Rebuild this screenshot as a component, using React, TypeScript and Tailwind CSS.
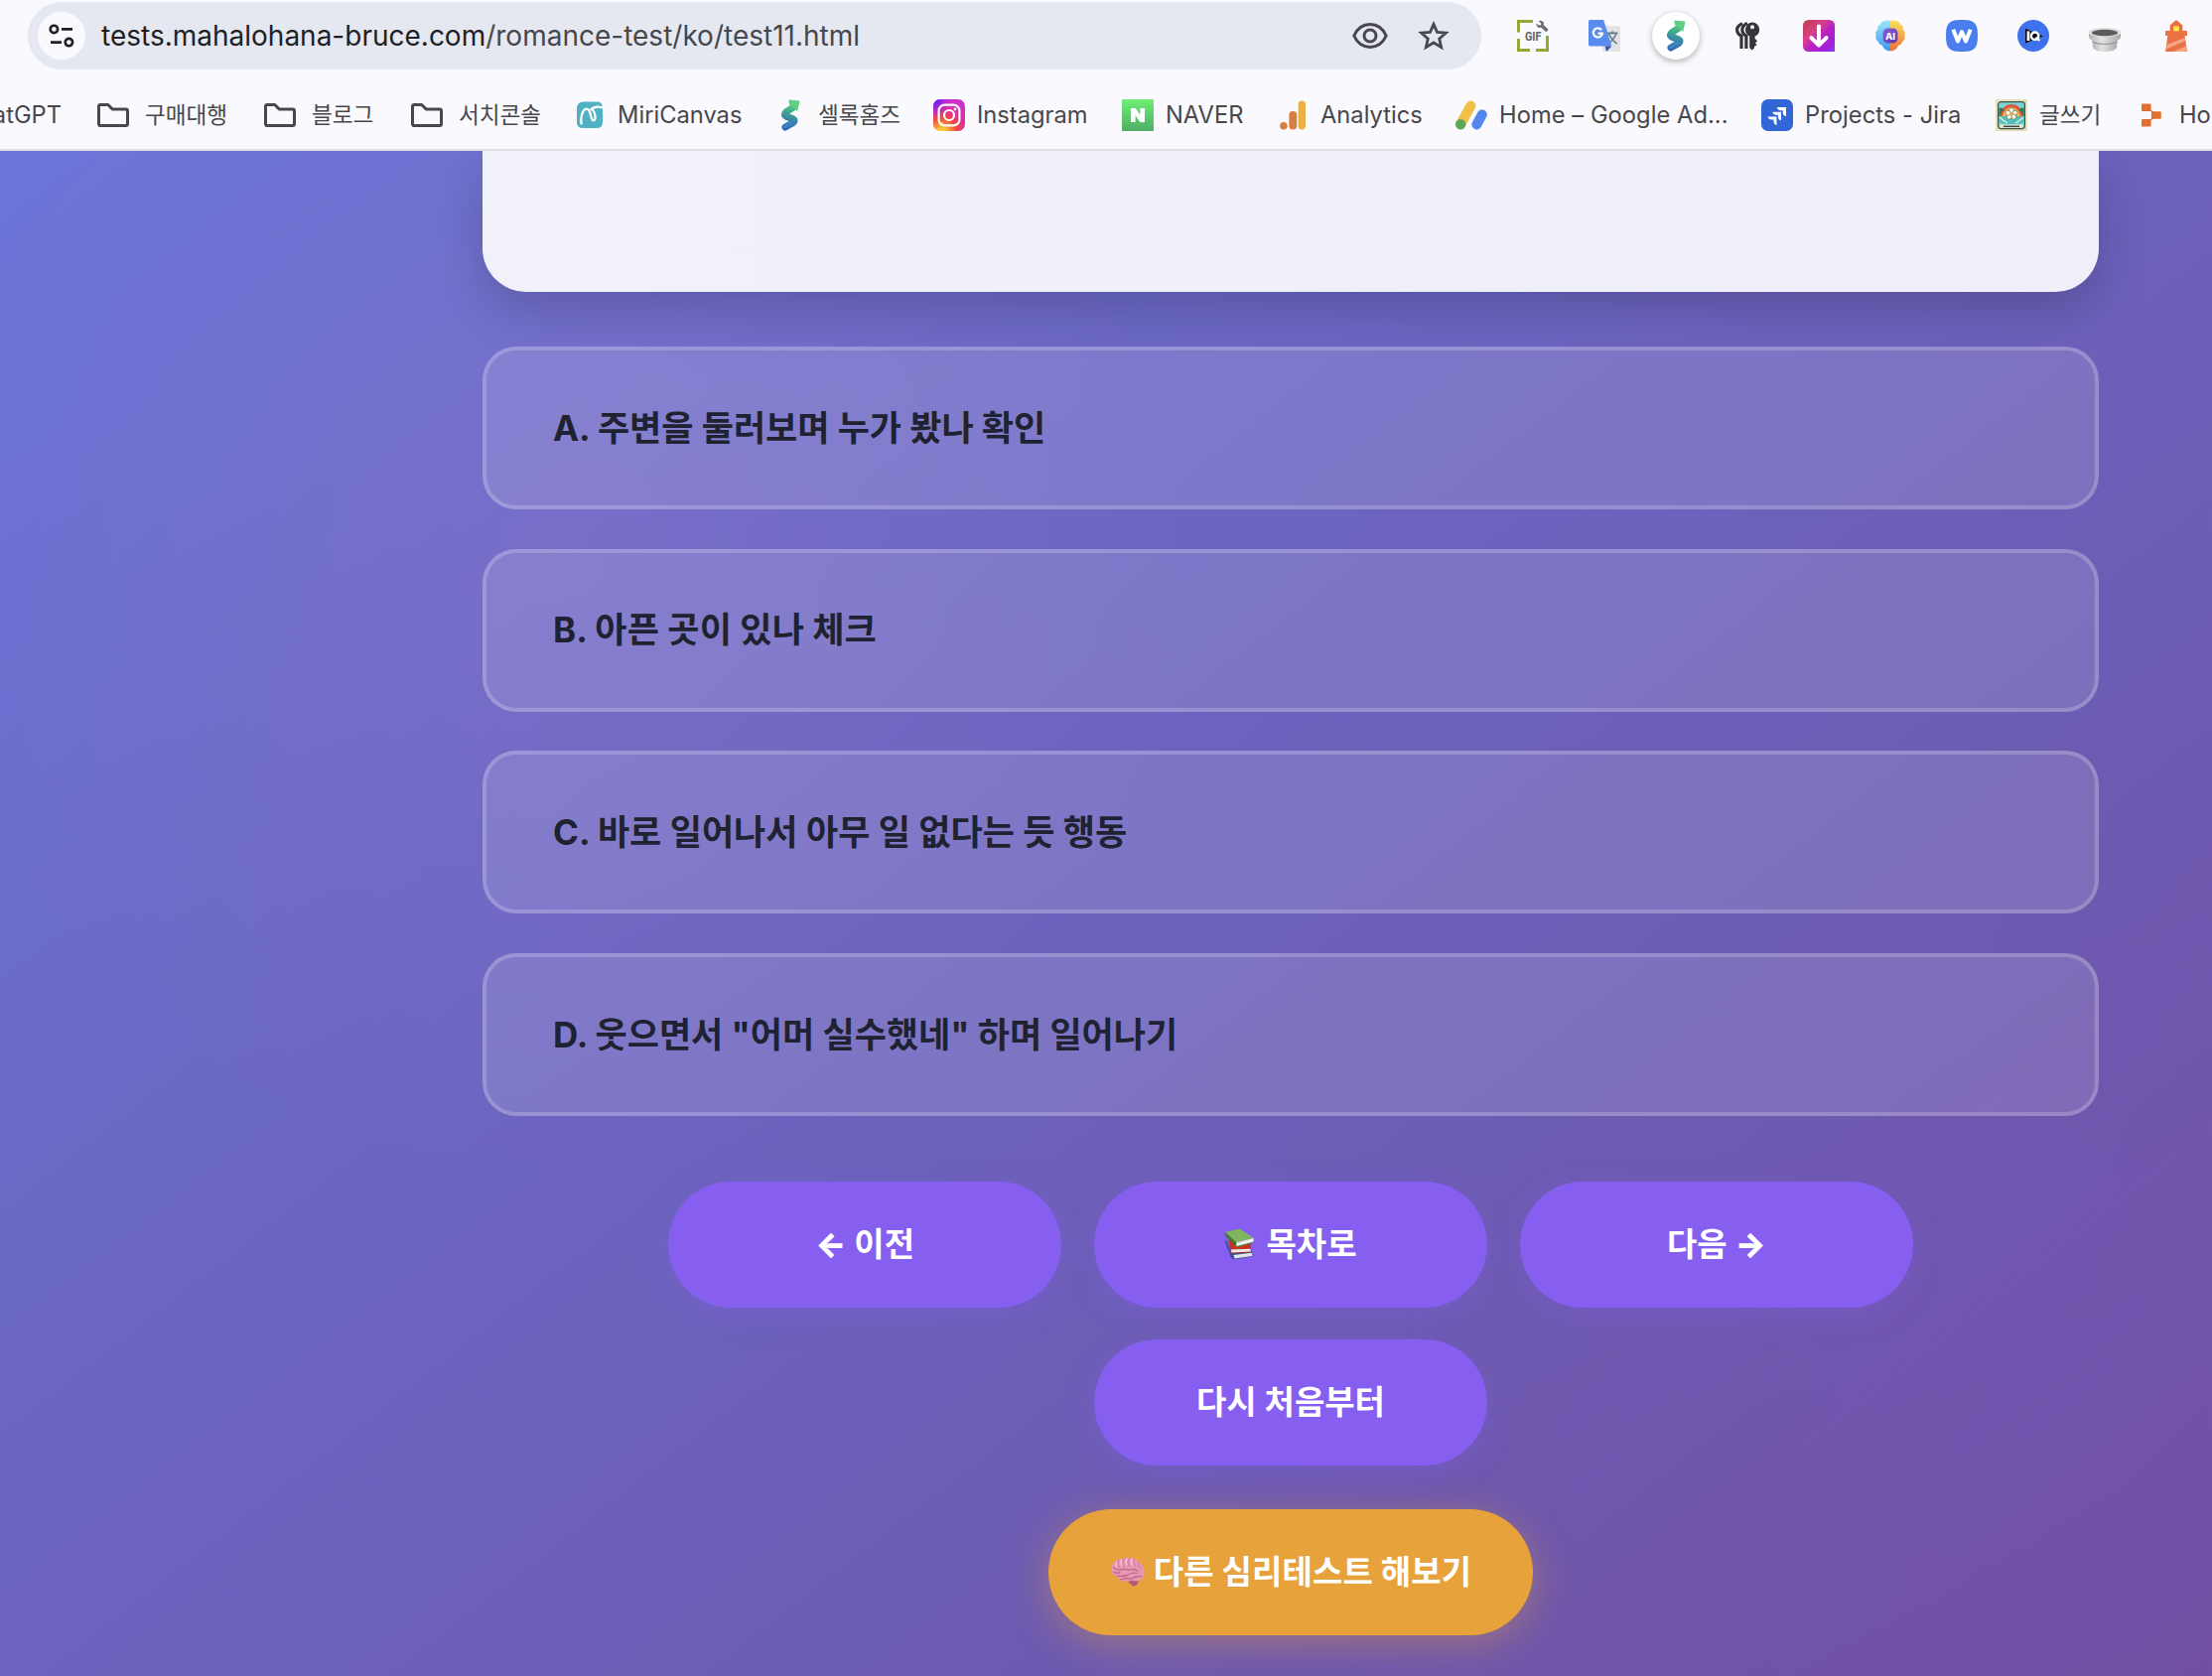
import React from "react";

const Swirl = ({ id }: { id: string }) => (
  <svg width="20" height="32" viewBox="0 0 20 32" fill="none">
    <defs>
      <linearGradient id={id} x1="14" y1="2" x2="6" y2="30" gradientUnits="userSpaceOnUse">
        <stop offset="0" stopColor="#62d483" />
        <stop offset="0.35" stopColor="#43b08c" />
        <stop offset="0.65" stopColor="#3a86a6" />
        <stop offset="1" stopColor="#2f68b8" />
      </linearGradient>
    </defs>
    <path d="M12.5 8.5 L6 12.6 Q2.6 15.4 6.4 17.4 L12.4 19.6 Q15.6 21.4 12.6 23.8 L5 28" stroke={`url(#${id})`} strokeWidth="7" strokeLinecap="round" strokeLinejoin="round" />
    <path d="M8.2 0.6 L19 1.4 Q19.6 1.5 19.4 2.2 L17.2 12 L14 9.6 L9 5 Z" fill="#5fd07f" />
    <path d="M4.2 27.8 L12 23.4" stroke="#4a90dc" strokeWidth="3" strokeLinecap="round" opacity="0.5" />
  </svg>
);

const Folder = () => (
  <svg width="32" height="24" viewBox="0 0 32 24" fill="none">
    <path d="M1.5 3.2 Q1.5 1.5 3.2 1.5 H10.8 L15.2 5.9 H28.8 Q30.5 5.9 30.5 7.6 V20.8 Q30.5 22.5 28.8 22.5 H3.2 Q1.5 22.5 1.5 20.8 Z" stroke="#47474c" strokeWidth="3" strokeLinejoin="round" />
  </svg>
);

const Miri = () => (
  <svg width="26" height="28" viewBox="0 0 26 28" fill="none">
    <path d="M7 0.6 H21 Q26 1 26 7 V21 Q26 27 20 27 H6 Q0 27 0 21 V7 Q0 1 7 0.6Z" fill="#50b0c4" />
    <path d="M4.6 22.5 C3.4 15 6 8.5 9.5 7.6 C14.5 6.6 13.5 19.6 16.8 19.4 C20 19 18.5 9.5 14.5 8 C17 5.5 22 5 25.5 6.4" stroke="#fff" strokeWidth="2.3" strokeLinecap="round" />
  </svg>
);

const Insta = () => (
  <svg width="32" height="32" viewBox="0 0 32 32" fill="none">
    <defs>
      <radialGradient id="ig1" cx="0.27" cy="1.05" r="1.05">
        <stop offset="0" stopColor="#fdd835" />
        <stop offset="0.15" stopColor="#f9bd3a" />
        <stop offset="0.45" stopColor="#f0483e" />
        <stop offset="0.7" stopColor="#e0309a" />
        <stop offset="1" stopColor="#d02fd0" />
      </radialGradient>
      <radialGradient id="ig2" cx="0" cy="0" r="0.6">
        <stop offset="0" stopColor="#3a1df5" />
        <stop offset="0.4" stopColor="#8a1df0" stopOpacity="0.85" />
        <stop offset="1" stopColor="#c020e0" stopOpacity="0" />
      </radialGradient>
    </defs>
    <rect width="32" height="32" rx="7" fill="url(#ig1)" />
    <rect width="32" height="32" rx="7" fill="url(#ig2)" />
    <rect x="5.6" y="5.6" width="20.8" height="20.8" rx="6" stroke="#fff" strokeWidth="2.2" />
    <circle cx="16" cy="16" r="5" stroke="#fff" strokeWidth="2.2" />
    <circle cx="22" cy="10" r="1.4" fill="#fff" />
  </svg>
);

const Naver = () => (
  <svg width="32" height="32" viewBox="0 0 32 32">
    <defs>
      <linearGradient id="nv" x1="0" y1="0" x2="0" y2="1">
        <stop offset="0" stopColor="#6eee74" />
        <stop offset="1" stopColor="#4fae66" />
      </linearGradient>
    </defs>
    <rect width="32" height="32" rx="1" fill="url(#nv)" />
    <path d="M9 9 H13.8 L18.4 15.8 V9 H23 V23 H18.4 L13.6 16.2 V23 H9 Z" fill="#fff" />
  </svg>
);

const Analytics = () => (
  <svg width="26" height="30" viewBox="0 0 26 30">
    <rect x="18.6" y="0.5" width="7.4" height="29" rx="3.7" fill="#eeb044" />
    <rect x="9.4" y="11" width="7.8" height="18.5" rx="3.7" fill="#d67f3f" />
    <circle cx="3.9" cy="25.7" r="3.8" fill="#d67f3f" />
  </svg>
);

const Ads = () => (
  <svg width="32" height="30" viewBox="0 0 32 30" fill="none">
    <path d="M15.4 5.6 L5.2 24" stroke="#f2c044" strokeWidth="10" strokeLinecap="round" />
    <path d="M26.8 14.4 L21.4 24.4" stroke="#5487ee" strokeWidth="10" strokeLinecap="round" />
    <circle cx="5.2" cy="24.2" r="5.2" fill="#5aa75c" />
  </svg>
);

const Jira = () => (
  <svg width="32" height="32" viewBox="0 0 32 32">
    <defs>
      <linearGradient id="jr" x1="1" y1="0" x2="0" y2="1">
        <stop offset="0.4" stopColor="#fff" />
        <stop offset="1" stopColor="#c9d8f6" />
      </linearGradient>
    </defs>
    <rect width="32" height="32" rx="7" fill="#3166d6" />
    <path d="M15.8 8 H25 V17.2 Q21.8 16.2 21.8 13.2 V11.2 H19.4 Q16.4 11 15.8 8Z" fill="#fff" />
    <path d="M11.2 12.8 H20 V21.6 Q17 20.6 17 17.6 V15.8 H14.6 Q11.8 15.6 11.2 12.8Z" fill="url(#jr)" />
    <path d="M6.6 17.4 H15.5 V26.2 Q12.5 25.2 12.5 22 V20.4 H10.2 Q7.2 20.2 6.6 17.4Z" fill="url(#jr)" />
  </svg>
);

const Stamp = () => (
  <svg width="32" height="32" viewBox="0 0 32 32">
    <rect width="32" height="32" fill="#e7dfba" />
    <rect x="2.6" y="2.6" width="26.8" height="27" rx="3" fill="#7ad6d4" stroke="#3c5350" strokeWidth="1.2" />
    <path d="M4 18 A12 13 0 0 1 28 18 Z" fill="#e2553f" />
    <path d="M7 18 A9 10 0 0 1 25 18 Z" fill="#f5c04a" />
    <path d="M10 18 A6 7 0 0 1 22 18 Z" fill="#ef8a50" />
    <path d="M3.4 9 Q7 7 8.6 12 Q5.6 11 4.6 17 H3.4Z M28.6 9 Q25 7 23.4 12 Q26.4 11 27.4 17 H28.6Z" fill="#2f7a55" />
    <path d="M3.4 17 H28.6 V23 Q22 26 16 25 Q10 26 3.4 23Z" fill="#4fc0bb" />
    <path d="M4 18 Q8 22 12 24 M28 18 Q24 22 20 24" stroke="#e8f3d8" strokeWidth="1.2" fill="none" />
    <g fill="#fbf6e2" stroke="#57524a" strokeWidth="0.6">
      <circle cx="16" cy="11.2" r="2.6" />
      <circle cx="19.5" cy="13.8" r="2.6" />
      <circle cx="18.3" cy="17.6" r="2.6" />
      <circle cx="13.7" cy="17.6" r="2.6" />
      <circle cx="12.5" cy="13.8" r="2.6" />
    </g>
    <circle cx="16" cy="14.8" r="1.7" fill="#f0b93c" />
    <rect x="4" y="25.4" width="24" height="3.4" rx="1" fill="#efe7c6" />
    <rect x="8" y="26.6" width="16" height="1.4" fill="#3c4440" />
  </svg>
);

const Blocks = () => (
  <svg width="20" height="24" viewBox="0 0 20 24" fill="#e36f2f">
    <rect x="0" y="0.5" width="9.6" height="7.6" rx="1" />
    <rect x="10" y="8.2" width="9.8" height="7.6" rx="1" />
    <rect x="0" y="16" width="9.6" height="7.6" rx="1" />
    <path d="M8 6.5 L12 9.5 M8 17.5 L12 14.5" stroke="#e36f2f" strokeWidth="1.4" />
  </svg>
);

const GifExt = () => (
  <svg width="32" height="32" viewBox="0 0 32 32" fill="none">
    <path d="M16 1.5 H1.5 V12.5 M1.5 19 V30.5 H13 M19 30.5 H30.5 V16" stroke="#90ab35" strokeWidth="3" />
    <text x="16.2" y="20.8" textAnchor="middle" fontFamily="Roboto, sans-serif" fontWeight="800" fontSize="13" textLength="16.5" lengthAdjust="spacingAndGlyphs" fill="#6a6a6a">GIF</text>
    <path d="M24.5 5.5 L30.5 11" stroke="#6a6a6a" strokeWidth="3.4" />
    <path d="M21.5 1.2 L24.4 3.4 L24 5.2 L21.8 5.4 L19.4 3.6 Q19.4 7.4 22.6 8 L26.6 6.6 L26.8 2.6 Q24.6 0 21.5 1.2Z" fill="#6a6a6a" />
  </svg>
);

const TranslateExt = () => (
  <svg width="32" height="32" viewBox="0 0 32 32" fill="none">
    <rect x="14" y="6" width="18" height="26" rx="1.6" fill="#e3e3e3" />
    <path d="M18.5 13.4 H29.5 M24 11.2 V13.4 M27.8 13.6 Q26 20 19.6 24 M20.6 14 Q23 20 28.6 24" stroke="#607d8b" strokeWidth="1.6" />
    <path d="M1.6 0 H15.2 L23.4 26.4 H1.6 Q0 26.4 0 24.8 V1.6 Q0 0 1.6 0Z" fill="#5a8bee" />
    <path d="M16.6 26.4 H23.4 L18 32 Z" fill="#3b4eb8" />
    <path d="M13.2 10.2 A4.6 4.6 0 1 0 14 13.6 H9.6" stroke="#fff" strokeWidth="2.2" />
  </svg>
);

const KeysExt = () => (
  <svg width="25" height="29" viewBox="0 0 25 29" fill="none">
    <path d="M7 1.6 Q0.2 4.6 2 10 Q3 13 6 14 V27" stroke="#35363a" strokeWidth="3.2" />
    <path d="M12 1.4 Q5.4 4.6 7.2 10 Q8.2 13 10.9 14 V27" stroke="#35363a" strokeWidth="3.2" />
    <path d="M17 0.4 A7.4 7.4 0 0 0 14.2 14.4 V26 L16.5 28.5 L19 26.4 V24.8 L21.6 23.4 L20 21.2 L22 19.2 L19.6 16.8 V14.6 A7.4 7.4 0 0 0 17 0.4Z" fill="#35363a" />
    <circle cx="17" cy="5.2" r="2" fill="#faf9fe" />
  </svg>
);

const DownExt = () => (
  <svg width="32" height="32" viewBox="0 0 32 32" fill="none">
    <defs>
      <linearGradient id="dn" x1="0" y1="0" x2="1" y2="1">
        <stop offset="0.1" stopColor="#c03f5c" />
        <stop offset="0.35" stopColor="#dc3f88" />
        <stop offset="0.55" stopColor="#b822c0" />
        <stop offset="0.8" stopColor="#a31ed8" />
        <stop offset="1" stopColor="#8a3cf4" />
      </linearGradient>
    </defs>
    <path d="M6 0 H26 Q32 0 32 6 V32 H6 Q0 32 0 26 V6 Q0 0 6 0Z" fill="url(#dn)" />
    <path d="M16 6.5 V25 M8.4 18 L16 25.6 L23.6 18" stroke="#fff" strokeWidth="4" strokeLinecap="round" strokeLinejoin="round" />
  </svg>
);

const AiExt = () => (
  <svg width="32" height="32" viewBox="0 0 32 32">
    <defs>
      <linearGradient id="aiL" x1="0" y1="0" x2="0" y2="1">
        <stop offset="0" stopColor="#9be6fb" />
        <stop offset="1" stopColor="#3d97ef" />
      </linearGradient>
      <linearGradient id="aiR" x1="0" y1="0" x2="0" y2="1">
        <stop offset="0" stopColor="#fbe35a" />
        <stop offset="1" stopColor="#ef7038" />
      </linearGradient>
      <linearGradient id="aiC" x1="0" y1="0" x2="1" y2="1">
        <stop offset="0" stopColor="#8d5fe0" />
        <stop offset="1" stopColor="#5a35a8" />
      </linearGradient>
    </defs>
    <path d="M16 1.4 Q14 -0.6 11 1 Q7 0.8 6 4.6 Q2.6 6 3.4 9.6 Q0.4 12.4 1.6 15.4 Q0.4 19.6 3.6 21.6 Q4.4 25 8 25.8 Q9.4 30 12.4 30.4 Q14.6 32 16 31Z" fill="url(#aiL)" />
    <path d="M16 1.4 Q18 -0.6 21 1 Q25 0.8 26 4.6 Q29.4 6 28.6 9.6 Q31.6 12.4 30.4 15.4 Q31.6 19.6 28.4 21.6 Q27.6 25 24 25.8 Q22.6 30 19.6 30.4 Q17.4 32 16 31Z" fill="url(#aiR)" />
    <rect x="8.6" y="8.6" width="14.8" height="14.8" rx="4.6" fill="url(#aiC)" />
    <text x="16" y="19.6" textAnchor="middle" fontFamily="Inter, sans-serif" fontWeight="800" fontSize="9.6" fill="#fff">AI</text>
  </svg>
);

const WExt = () => (
  <svg width="32" height="32" viewBox="0 0 32 32" fill="none">
    <path d="M16 0 C28 0 32 2.6 32 16 C32 29.4 28 32 16 32 C4 32 0 29.4 0 16 C0 2.6 4 0 16 0Z" fill="#4a7eee" />
    <path d="M8 11.5 L12 21.5 L16 12 L20 21.5 L24 11.5" stroke="#fff" strokeWidth="4" strokeLinejoin="round" strokeLinecap="square" />
  </svg>
);

const IqExt = () => (
  <svg width="32" height="32" viewBox="0 0 32 32">
    <circle cx="16" cy="16" r="16" fill="#3d72ec" />
    <path d="M8 8.8 L26 16.4 L8 23.6Z" fill="#0b0b10" />
    <path d="M9.6 11.4 H12.4 V21 H9.6Z" fill="#fff" />
    <circle cx="17.6" cy="16.2" r="3.7" stroke="#fff" strokeWidth="2.4" fill="#0b0b10" />
    <path d="M18.4 17.6 L22.4 20.8" stroke="#fff" strokeWidth="2.2" />
  </svg>
);

const PotExt = () => (
  <svg width="34" height="32" viewBox="0 0 34 32">
    <defs>
      <linearGradient id="pt" x1="0" y1="0" x2="1" y2="0">
        <stop offset="0" stopColor="#b4b4b4" />
        <stop offset="0.4" stopColor="#e2e2e2" />
        <stop offset="1" stopColor="#a9a9a9" />
      </linearGradient>
    </defs>
    <path d="M4 18 H30 L29 28 Q27 32 17 32 Q7 32 5 28Z" fill="url(#pt)" />
    <path d="M1 12 V18 Q3 22.6 17 22.6 Q31 22.6 33 18 V12Z" fill="url(#pt)" />
    <path d="M4.6 22.4 Q16 26.6 29.4 22.4" stroke="#8d8d8d" strokeWidth="1" fill="none" />
    <ellipse cx="17" cy="12.6" rx="16.4" ry="4.6" fill="#dedede" />
    <ellipse cx="17" cy="13" rx="13" ry="3.2" fill="#5b5b5b" />
  </svg>
);

const LightExt = () => (
  <svg width="24" height="32" viewBox="0 0 24 32">
    <path d="M12 0 L18.4 5.6 V11 H23 V16 H20.6 L23 32 H1 L3.4 16 H1 V11 H5.6 V5.6Z" fill="#ec7142" />
    <rect x="9.2" y="6.4" width="5.6" height="5" fill="#fbe84c" />
    <path d="M2.6 25 L20.6 18 L21 21 L1.8 29.4Z M9 32 L22 26.6 L22.7 31 L21 32Z" fill="#f3a68a" />
  </svg>
);

const Books = () => (
  <svg width="31" height="32" viewBox="0 0 31 32">
    <path d="M0.6 12.5 L3 13 L9 31.4 L6.6 29Z" fill="#3a4f9c" />
    <path d="M6 24.4 L27.4 21 L28.4 28.6 L9 31.6Z" fill="#34508f" />
    <path d="M9.4 27 L27.8 24.8 L28.2 28 L10.6 30.6Z" fill="#e4e6ea" />
    <path d="M4.4 11 L22 16 L26.6 15 L27 24.4 L6.8 25.4Z" fill="#c8321f" />
    <path d="M7 21.6 L26.6 20.8 L26.8 23.6 L7.4 24.6Z" fill="#ececec" />
    <path d="M1 4 L15.6 0.4 L29.8 10 L12.4 14.6Z" fill="#7fb55e" />
    <path d="M1 4 L12.4 14.6 L11.6 18.2 L1.6 8Z" fill="#3f7a2c" />
    <path d="M12.4 14.6 L29.8 10 L29.4 14 L12.4 18.4Z" fill="#efefef" />
    <path d="M12 18.2 L29.6 13.8 L29.8 14.8 L12.4 19.4Z" fill="#4a8a34" />
  </svg>
);

const Brain = () => (
  <svg width="35" height="30" viewBox="0 0 35 30" fill="none">
    <path d="M19 21 Q27 20 29 24 Q28 29.4 23.6 29.4 Q20.6 28 18.4 25Z" fill="#b75a78" />
    <path d="M1 13 Q1.6 5 9 2.6 Q16 -0.6 23 1.4 Q32 4 34.2 12 Q35.6 20 30.6 23.4 Q26 25.2 22.6 23.4 Q17 26 11.6 24 Q8 22.8 7.4 19.4 Q0.6 18.4 1 13Z" fill="#e796b3" />
    <path d="M7.4 19 Q13 20 17 18.6 Q22 15 27 16.4 M3.4 10.6 Q7 13.6 11 13 Q15 11.4 19 13.4 Q24 11.8 28 14 M11 23 Q16 20.6 21 22.4 Q26 18.6 32 20 M4 15.4 Q7 17 9.6 15.6" stroke="#bd6485" strokeWidth="1.2" strokeLinecap="round" />
    <path d="M9 3.6 Q7 8 9.6 11 M14 1.6 Q11.6 6 14 10 M19.4 1.4 Q17 6 19.4 9.6 M24.4 2.4 Q22.6 6.4 25.6 9.6 M29 5.4 Q27.6 9 30.6 12" stroke="#cf7d9d" strokeWidth="1" strokeLinecap="round" />
    <path d="M6.6 5.6 Q5.4 8 6.4 9.6 M11.6 3 Q10.4 6 11.8 8.6 M16.8 2 Q15.4 5 16.8 8 M22 2.4 Q20.6 5.4 22.4 8" stroke="#f8c6d8" strokeWidth="1.3" strokeLinecap="round" />
  </svg>
);

const Bookmark = ({ w, icon, label, text }: { w: string; icon: React.ReactNode; label: string; text?: string }) => (
  <div className={"flex h-full shrink-0 items-center gap-3 " + w}>
    <span className="flex w-8 shrink-0 items-center justify-center">{icon}</span>
    <span className={"whitespace-nowrap " + (text || "")}>{label}</span>
  </div>
);

const Option = ({ children, track }: { children: string; track?: string }) => (
  <button className="flex h-[164px] w-full items-center rounded-[34px] border-4 border-white/20 bg-white/12 pl-[67px] text-left text-[35px] font-bold text-[#1f2230]">
    <span className={"whitespace-nowrap " + (track || "")}>{children}</span>
  </button>
);

const NavButton = ({ children }: { children: React.ReactNode }) => (
  <button className="flex h-[127px] w-[396px] items-center justify-center gap-[11px] rounded-full bg-[#865ff0] text-[33px] font-bold whitespace-nowrap text-white shadow-[0_8px_30px_rgba(134,95,240,0.3)]">
    {children}
  </button>
);

const extensions = [GifExt, TranslateExt, null, KeysExt, DownExt, AiExt, WExt, IqExt, PotExt, LightExt];

export default function App() {
  return (
    <div className="flex h-[1688px] w-[2228px] flex-col overflow-hidden bg-[#faf9fe] font-[Inter,'Noto_Sans_CJK_KR',sans-serif]">
      <header className="flex h-[152px] shrink-0 flex-col border-b-2 border-[#dfe1ea]">
        <div className="flex h-[72px] items-center pl-7">
          <div className="flex h-[68px] w-[1464px] items-center rounded-full bg-[#e5e8f1] pl-[10px] pr-8">
            <div className="flex size-12 items-center justify-center rounded-full bg-[#faf9fe]">
              <svg width="26" height="24" viewBox="0 0 26 24" fill="none" stroke="#1f1f24" strokeWidth="2.6">
                <circle cx="5.4" cy="5.4" r="3.7" />
                <path d="M13 5.4 H24 M2 18.6 H13" />
                <circle cx="20.4" cy="18.6" r="3.7" />
              </svg>
            </div>
            <div className="ml-4 text-[28px] whitespace-nowrap text-[#1f1f24]">
              tests.mahalohana-bruce.com<span className="text-[#47474c]">/romance-test/ko/test11.html</span>
            </div>
            <svg className="ml-auto" width="36" height="26" viewBox="0 0 36 26" fill="none" stroke="#47474c" strokeWidth="3">
              <path d="M1.8 13 Q7 1.6 18 1.6 Q29 1.6 34.2 13 Q29 24.4 18 24.4 Q7 24.4 1.8 13Z" />
              <circle cx="18" cy="13" r="6" />
            </svg>
            <svg className="ml-[30px]" width="32" height="30" viewBox="0 0 32 30" fill="none" stroke="#47474c" strokeWidth="2.8">
              <path d="M16 3.4 L19.5 11.4 L28.4 12.2 L21.7 18 L23.7 26.6 L16 22 L8.3 26.6 L10.3 18 L3.6 12.2 L12.5 11.4 Z" />
            </svg>
          </div>
          <div className="ml-4 flex items-center">
            {extensions.map((Ext, i) => (
              <div key={i} className="flex h-12 w-[72px] shrink-0 items-center justify-center">
                {Ext ? (
                  <Ext />
                ) : (
                  <div className="flex size-12 items-center justify-center rounded-full bg-white shadow-[0_2px_6px_rgba(0,0,0,0.3)]">
                    <Swirl id="sw1" />
                  </div>
                )}
              </div>
            ))}
          </div>
        </div>
        <div className="flex h-[78px] items-center overflow-hidden pt-[10px] text-[23.7px] text-[#47474c]">
          <div className="flex w-[98px] shrink-0 justify-end pr-9">ChatGPT</div>
          <Bookmark w="w-[168px]" icon={<Folder />} label="구매대행" text="ml-1 text-[22.6px]" />
          <Bookmark w="w-[148px]" icon={<Folder />} label="블로그" text="ml-1 text-[22.6px]" />
          <Bookmark w="w-[164px]" icon={<Folder />} label="서치콘솔" text="ml-1 text-[22.6px]" />
          <Bookmark w="w-[202px]" icon={<Miri />} label="MiriCanvas" />
          <Bookmark w="w-[160px]" icon={<Swirl id="sw2" />} label="셀록홈즈" text="text-[22.6px]" />
          <Bookmark w="w-[190px]" icon={<Insta />} label="Instagram" />
          <Bookmark w="w-[156px]" icon={<Naver />} label="NAVER" />
          <Bookmark w="w-[180px]" icon={<Analytics />} label="Analytics" />
          <Bookmark w="w-[308px]" icon={<Ads />} label="Home – Google Ad..." text="tracking-[0.05px]" />
          <Bookmark w="w-[236px]" icon={<Jira />} label="Projects - Jira" text="tracking-[0.05px]" />
          <Bookmark w="w-[141px]" icon={<Stamp />} label="글쓰기" text="text-[22.6px]" />
          <Bookmark w="w-[141px]" icon={<Blocks />} label="Home" />
        </div>
      </header>
      <main className="flex flex-1 flex-col items-center overflow-hidden bg-[radial-gradient(circle_at_560px_400px,rgba(255,140,170,0.08),transparent_650px),radial-gradient(circle_at_2060px_1230px,rgba(125,85,205,0.12),transparent_550px),linear-gradient(142deg,#6b75d8_0%,#6c63be_48%,#6d5ab0_72%,#714fa2_100%)] pl-[372px]">
        <div className="h-[142px] w-[1628px] shrink-0 rounded-b-[44px] bg-[linear-gradient(90deg,#f1f1fa,#f0eff9)] shadow-[0_18px_50px_rgba(0,0,0,0.18)]" />
        <div className="mt-[55px] flex w-[1628px] flex-col gap-[39.6px]">
          <Option track="tracking-[-0.03px]">A. 주변을 둘러보며 누가 봤나 확인</Option>
          <Option track="tracking-[0.1px]">B. 아픈 곳이 있나 체크</Option>
          <Option track="tracking-[0.03px]">C. 바로 일어나서 아무 일 없다는 듯 행동</Option>
          <Option track="tracking-[-0.02px]">D. 웃으면서 "어머 실수했네" 하며 일어나기</Option>
        </div>
        <div className="mt-[66px] flex w-[1300px] flex-wrap justify-center gap-x-[33px] gap-y-8">
          <NavButton>
            <span><span className="font-black">←</span> 이전</span>
          </NavButton>
          <NavButton>
            <Books />
            <span>목차로</span>
          </NavButton>
          <NavButton>
            <span>다음 <span className="font-black">→</span></span>
          </NavButton>
          <NavButton>다시 처음부터</NavButton>
        </div>
        <button className="mt-11 flex h-[127px] w-[488px] items-center justify-center gap-[9px] rounded-full bg-[#e8a23c] text-[33px] font-bold tracking-[0.1px] whitespace-nowrap text-white shadow-[0_8px_40px_rgba(232,162,60,0.4)]">
          <Brain />
          <span>다른 심리테스트 해보기</span>
        </button>
      </main>
    </div>
  );
}
